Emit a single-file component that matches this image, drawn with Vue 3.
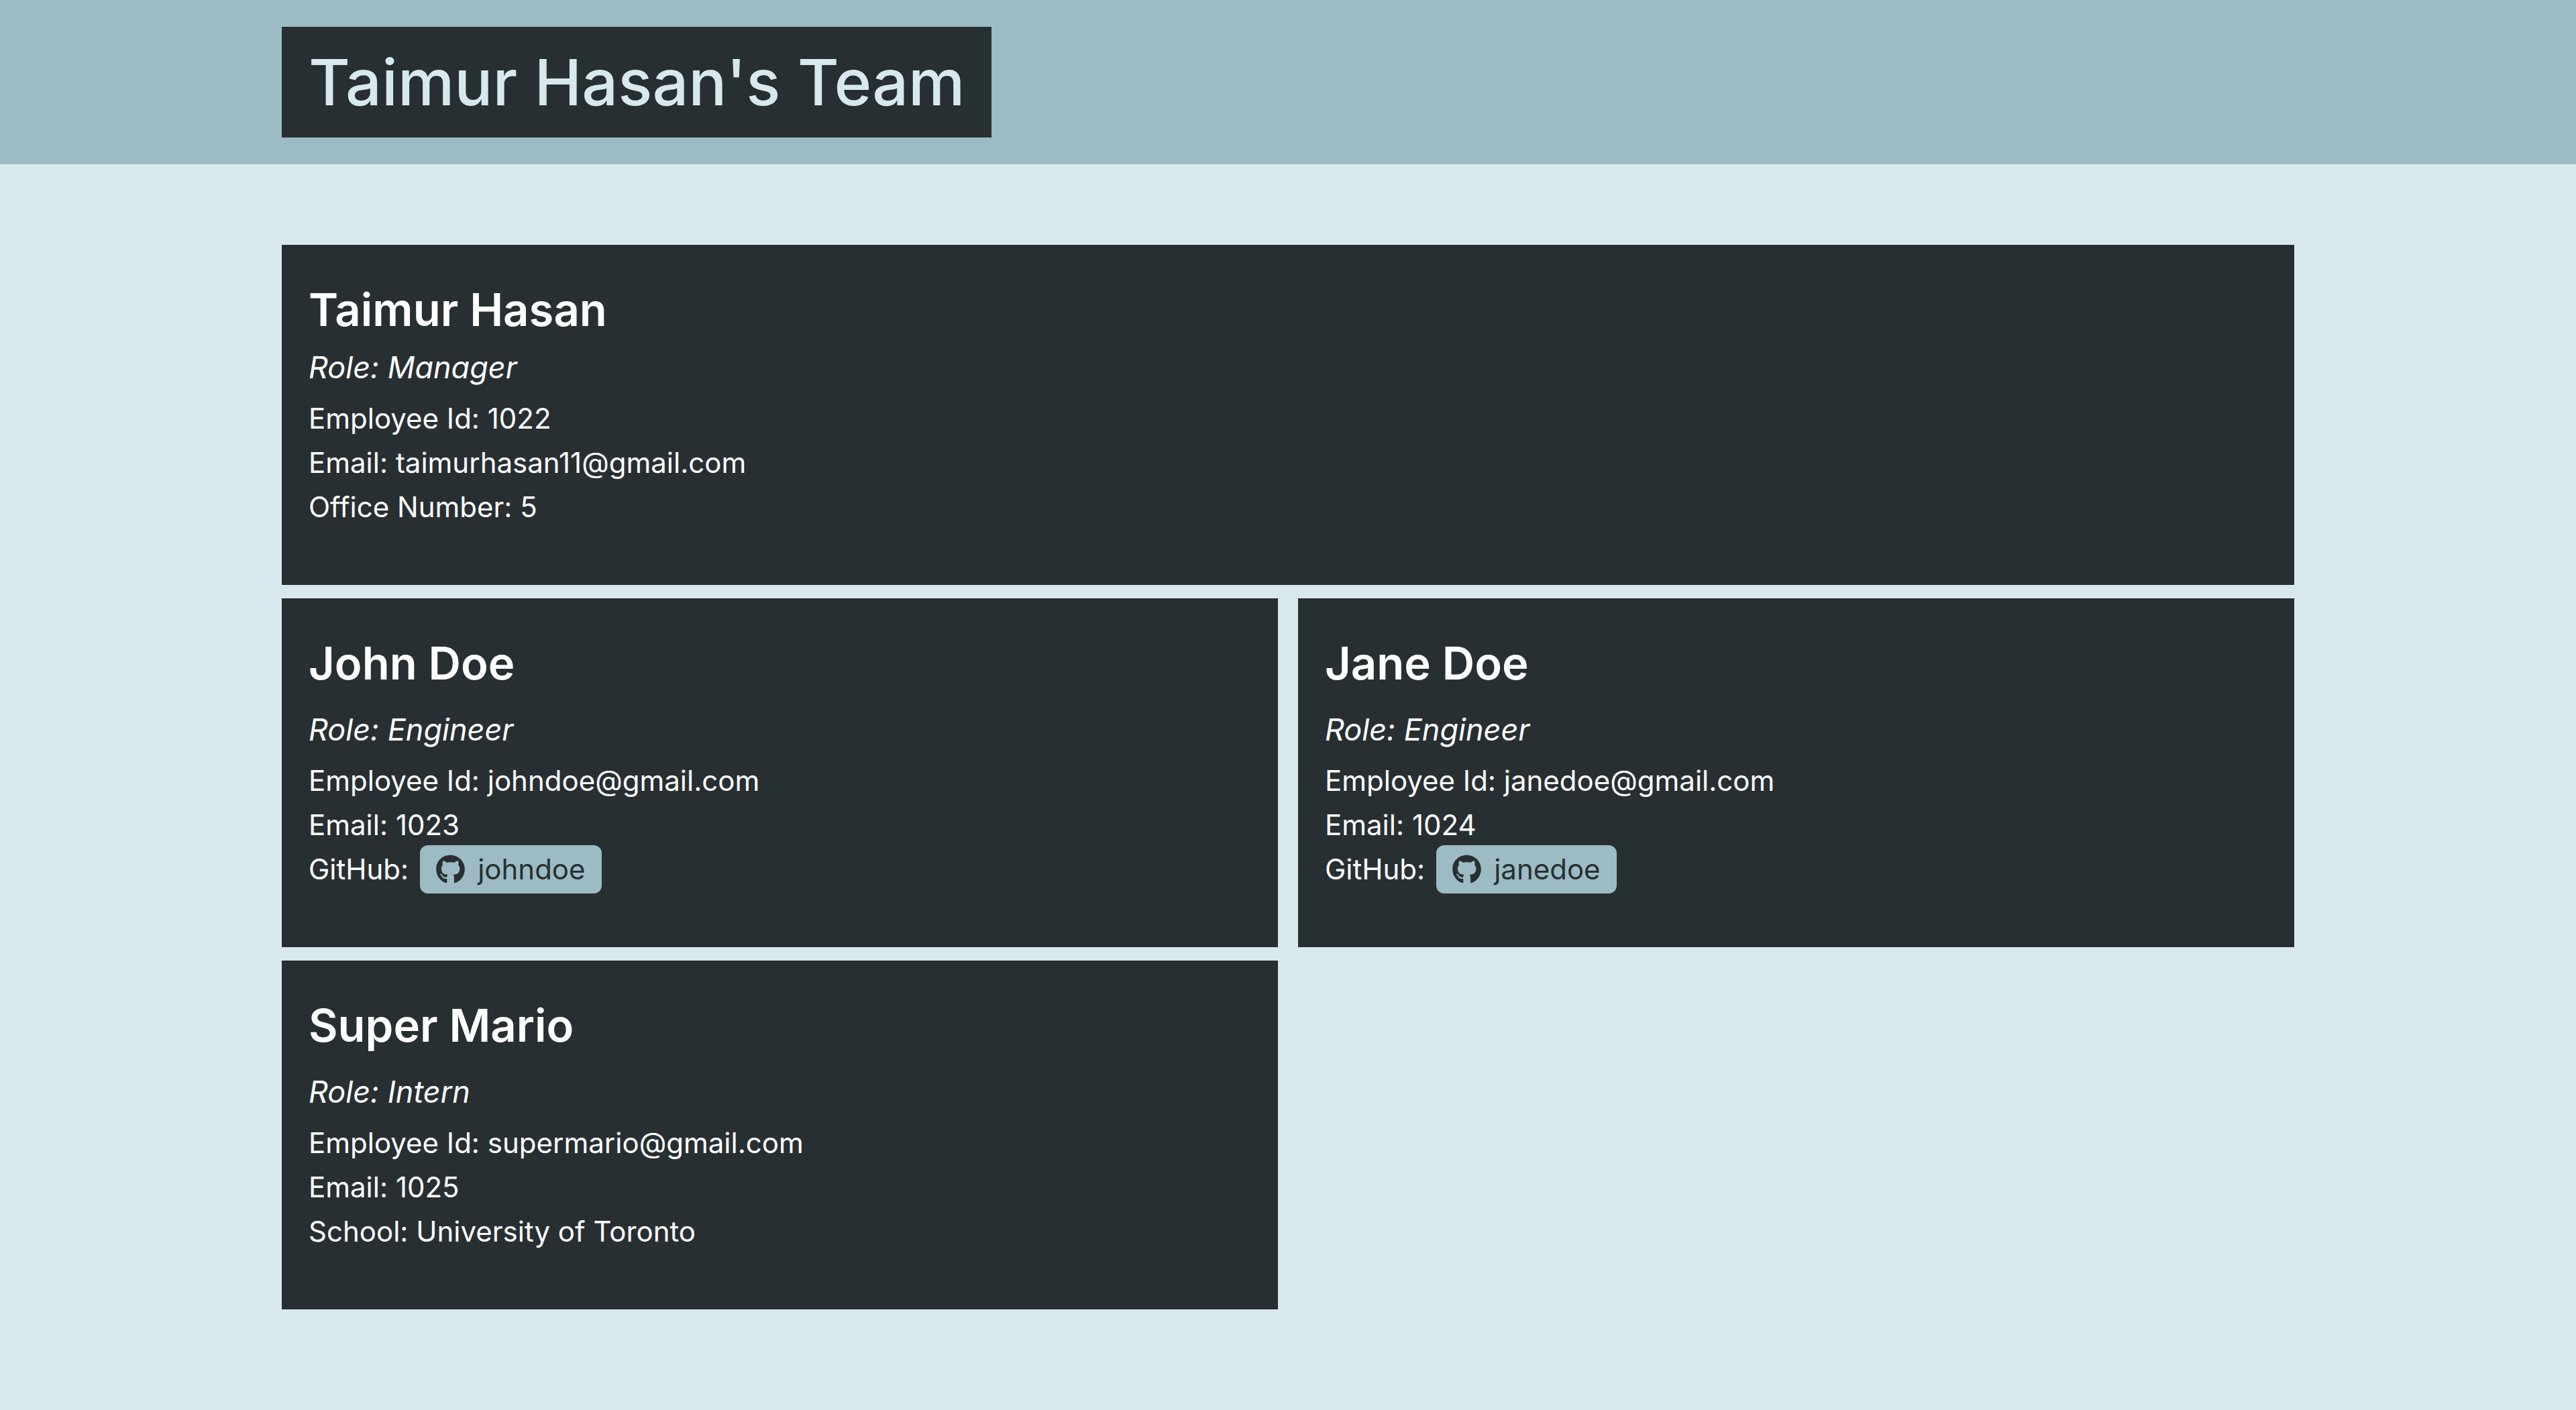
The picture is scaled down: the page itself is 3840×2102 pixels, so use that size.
<script setup>
const team = [
  { name: 'Taimur Hasan', role: 'Manager', id: '1022', email: 'taimurhasan11@gmail.com', label: 'Office Number', value: '5', lead: true },
  { name: 'John Doe', role: 'Engineer', id: 'johndoe@gmail.com', email: '1023', github: 'johndoe' },
  { name: 'Jane Doe', role: 'Engineer', id: 'janedoe@gmail.com', email: '1024', github: 'janedoe' },
  { name: 'Super Mario', role: 'Intern', id: 'supermario@gmail.com', email: '1025', label: 'School', value: 'University of Toronto' },
]
</script>

<template>
  <div class="page">
    <header class="banner">
      <div class="container">
        <h1 class="title">Taimur Hasan's Team</h1>
      </div>
    </header>
    <main class="container team">
      <article v-for="m in team" :key="m.name" class="card" :class="{ lead: m.lead }">
        <h2 class="name">{{ m.name }}</h2>
        <h3 class="role">Role: {{ m.role }}</h3>
        <ul class="facts">
          <li>Employee Id: {{ m.id }}</li>
          <li>Email: {{ m.email }}</li>
          <li v-if="m.github" class="github">
            <span>GitHub:</span>
            <a class="handle" :href="'https://github.com/' + m.github">
              <svg class="mark" viewBox="0 0 496 512" aria-hidden="true">
                <path fill="currentColor" d="M165.9 397.4c0 2-2.3 3.6-5.2 3.6-3.3.3-5.6-1.3-5.6-3.6 0-2 2.3-3.6 5.2-3.6 3-.3 5.6 1.3 5.6 3.6zm-31.1-4.5c-.7 2 1.3 4.3 4.3 4.9 2.6 1 5.6 0 6.2-2s-1.3-4.3-4.3-5.2c-2.6-.7-5.5.3-6.2 2.3zm44.2-1.7c-2.9.7-4.9 2.6-4.6 4.9.3 2 2.9 3.3 5.9 2.6 2.9-.7 4.9-2.6 4.6-4.6-.3-1.9-3-3.2-5.9-2.9zM244.8 8C106.1 8 0 113.3 0 252c0 110.9 69.8 205.8 169.5 239.2 12.8 2.3 17.3-5.6 17.3-12.1 0-6.2-.3-40.4-.3-61.4 0 0-70 15-84.7-29.8 0 0-11.4-29.1-27.8-36.6 0 0-22.9-15.7 1.6-15.4 0 0 24.9 2 38.6 25.8 21.9 38.6 58.6 27.5 72.9 20.9 2.3-16 8.8-27.1 16-33.7-55.9-6.2-112.3-14.3-112.3-110.5 0-27.5 7.6-41.3 23.6-58.9-2.6-6.5-11.1-33.3 2.6-67.9 20.9-6.5 69 27 69 27 20-5.6 41.5-8.5 62.8-8.5s42.8 2.9 62.8 8.5c0 0 48.1-33.6 69-27 13.7 34.7 5.2 61.4 2.6 67.9 16 17.7 25.8 31.5 25.8 58.9 0 96.5-58.9 104.2-114.8 110.5 9.2 7.9 17 22.9 17 46.4 0 33.7-.3 75.4-.3 83.6 0 6.5 4.6 14.4 17.3 12.1C428.2 457.8 496 362.9 496 252 496 113.3 383.5 8 244.8 8zM97.2 352.9c-1.3 1-1 3.3.7 5.2 1.6 1.6 3.9 2.3 5.2 1 1.3-1 1-3.3-.7-5.2-1.6-1.6-3.9-2.3-5.2-1zm-10.8-8.1c-.7 1.3.3 2.9 2.3 3.9 1.6 1 3.6.7 4.3-.7.7-1.3-.3-2.9-2.3-3.9-2-.6-3.6-.3-4.3.7zm32.4 35.6c-1.6 1.3-1 4.3 1.3 6.2 2.3 2.3 5.2 2.6 6.5 1 1.3-1.3.7-4.3-1.3-6.2-2.2-2.3-5.2-2.6-6.5-1zm-11.4-14.7c-1.6 1-1.6 3.6 0 5.9 1.6 2.3 4.3 3.3 5.6 2.3 1.6-1.3 1.6-3.9 0-6.2-1.4-2.3-4-3.3-5.6-2z" />
              </svg>
              <span>{{ m.github }}</span>
            </a>
          </li>
          <li v-else>{{ m.label }}: {{ m.value }}</li>
        </ul>
      </article>
    </main>
  </div>
</template>

<style>
body {
  margin: 0;
  background: #d8e9ed;
}
</style>

<style scoped>
.page {
  min-height: 100vh;
  background: #d8e9ed;
  color: #fff;
  font-family: Inter, "Liberation Sans", sans-serif;
  font-size: 42px;
  line-height: 66px;
}
.container {
  box-sizing: border-box;
  width: 100%;
  max-width: 3000px;
  margin: 0 auto;
}
.banner {
  padding: 40px 0;
  background: #9cbbc5;
}
.title {
  width: fit-content;
  margin: 0;
  padding: 20px 40px;
  background: #282f32;
  color: #d8e9ed;
  font-size: 95px;
  font-weight: 500;
  line-height: 125px;
}
.team {
  display: grid;
  grid-template-columns: 1fr 1fr;
  gap: 20px 30px;
  padding: 120px 0;
}
.card {
  padding: 54px 40px 83px;
  background: #282f32;
}
.lead {
  grid-column: 1 / -1;
}
.name {
  margin: 0 0 27px;
  font-size: 67px;
  font-weight: 600;
  line-height: 86px;
}
.lead .name {
  margin-bottom: 14px;
}
.role {
  margin: 0 0 14px;
  font-size: 45px;
  font-style: italic;
  font-weight: 400;
  line-height: 58px;
}
.facts {
  margin: 0;
  padding: 0;
  list-style: none;
}
.github {
  display: flex;
  align-items: center;
  gap: 17px;
  height: 66px;
}
.handle {
  display: inline-flex;
  align-items: center;
  gap: 19px;
  padding: 3px 24px;
  border-radius: 12px;
  background: #9cbbc5;
  color: #282f32;
  text-decoration: none;
}
.mark {
  width: 43px;
  height: 44px;
}
</style>
